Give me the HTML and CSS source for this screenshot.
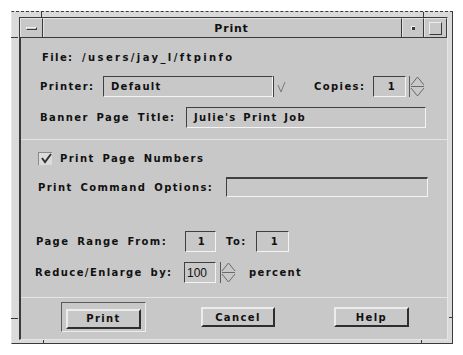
FILE: index.html
```html
<!DOCTYPE html>
<html>
  <head>
    <meta charset="UTF-8" />
    <title>Print</title>
    <link rel="stylesheet" href="styles.css">
  </head>
  <body>
    <div class="window">
      <span class="tick tick-tl"></span>
      <span class="tick tick-tr"></span>
      <span class="tick tick-bl"></span>
      <span class="tick tick-br"></span>
      <span class="tick tick-lt"></span>
      <span class="tick tick-lb"></span>
      <span class="tick tick-rb"></span>

      <div class="frame">
        <div class="titlebar">
          <div class="tb-menu"><span class="menu-bar"></span></div>
          <div class="tb-title">Print</div>
          <div class="tb-min"><span class="min-dot"></span></div>
          <div class="tb-max"><span class="max-box"></span></div>
        </div>

        <div class="content">
          <div class="row row-file">
            <span class="lbl lbl-file">File:</span>
            <span class="lbl lbl-path">/users/jay_l/ftpinfo</span>
          </div>

          <div class="row row-printer">
            <span class="lbl lbl-printer">Printer:</span>
            <div class="field field-printer"><span>Default</span></div>
            <div class="drop">
              <svg width="16" height="21" viewBox="0 0 16 21">
                <polyline points="4,9 7,16 11,6" fill="none" stroke="#7a7a7a" stroke-width="1" />
              </svg>
            </div>
            <span class="lbl lbl-copies">Copies:</span>
            <div class="field field-num field-copies"><span>1</span></div>
            <div class="spin">
              <svg width="15" height="21" viewBox="0 0 15 21">
                <polyline points="1,9 7.5,1 14,9" fill="none" stroke="#6a6a6a" />
                <line x1="1" y1="10.5" x2="14" y2="10.5" stroke="#6a6a6a" />
                <polyline points="1,12 7.5,20 14,12" fill="none" stroke="#6a6a6a" />
              </svg>
            </div>
          </div>

          <div class="row row-banner">
            <span class="lbl lbl-banner">Banner Page Title:</span>
            <div class="field field-banner"><span>Julie's Print Job</span></div>
          </div>

          <div class="sep sep-top"></div>

          <div class="row row-check">
            <span class="check">
              <svg width="12" height="11" viewBox="0 0 12 11">
                <polyline points="2,5 5,9 11,1" fill="none" stroke="#333" stroke-width="2" />
              </svg>
            </span>
            <span class="lbl">Print Page Numbers</span>
          </div>

          <div class="row row-cmd">
            <span class="lbl lbl-cmd">Print Command Options:</span>
            <div class="field field-cmd"></div>
          </div>

          <div class="row row-range">
            <span class="lbl lbl-range">Page Range From:</span>
            <div class="field field-num field-from"><span>1</span></div>
            <span class="lbl lbl-to">To:</span>
            <div class="field field-num field-to"><span>1</span></div>
          </div>

          <div class="row row-reduce">
            <span class="lbl lbl-range">Reduce/Enlarge by:</span>
            <div class="field field-pct"><span>100</span></div>
            <div class="spin spin-pct">
              <svg width="15" height="21" viewBox="0 0 15 21">
                <polyline points="1,9 7.5,1 14,9" fill="none" stroke="#6a6a6a" />
                <line x1="1" y1="10.5" x2="14" y2="10.5" stroke="#6a6a6a" />
                <polyline points="1,12 7.5,20 14,12" fill="none" stroke="#6a6a6a" />
              </svg>
            </div>
            <span class="lbl lbl-pct">percent</span>
          </div>

          <div class="sep sep-bottom"></div>

          <div class="row row-buttons">
            <div class="default-ring"><button class="btn">Print</button></div>
            <button class="btn btn-cancel">Cancel</button>
            <button class="btn btn-help">Help</button>
          </div>
        </div>
      </div>
    </div>
  </body>
</html>
```

FILE: styles.css
```css
* {
  box-sizing: border-box;
}

body {
  margin: 0;
  background: #fff;
  font-family: "DejaVu Sans", sans-serif;
}

.window {
  position: relative;
  width: 442px;
  height: 333px;
  margin: 11px 0 0 11px;
  padding: 5px 4px 3px 7px;
  background: #dadada;
  border-top: 1px dashed #3a3a3a;
  border-right: 1px solid #3a3a3a;
  border-bottom: 1px solid #3a3a3a;
  border-left: 1px solid #e6e6e6;
}

/* resize corner marks on the frame */
.tick {
  position: absolute;
  background: #3a3a3a;
}

.tick-tl { left: 29px; top: 0; width: 1px; height: 5px; }
.tick-tr { left: 411px; top: 0; width: 1px; height: 5px; }
.tick-bl { left: 31px; bottom: 0; width: 1px; height: 3px; }
.tick-br { left: 409px; bottom: 0; width: 1px; height: 3px; }
.tick-lt { left: -1px; top: 25px; width: 7px; height: 1px; }
.tick-lb { left: -1px; top: 306px; width: 7px; height: 1px; }
.tick-rb { right: -1px; top: 305px; width: 4px; height: 1px; }

.frame {
  height: 100%;
  display: flex;
  flex-direction: column;
  background: #c8c8c8;
  border-top: 1px solid #3a3a3a;
  border-left: 2px solid #3a3a3a;
  border-right: 1px solid #e6e6e6;
  border-bottom: 1px solid #e6e6e6;
}

.titlebar {
  display: flex;
  height: 20px;
  margin-left: -1px;
  border-bottom: 1px solid #3a3a3a;
}

.titlebar > div {
  border-top: 1px solid #e2e2e2;
  border-left: 1px solid #e2e2e2;
  border-right: 1px solid #3a3a3a;
  display: flex;
  align-items: center;
  justify-content: center;
}

.tb-menu {
  width: 23px;
}

.menu-bar {
  width: 11px;
  height: 3px;
  border-top: 1px solid #f0f0f0;
  border-bottom: 1px solid #3a3a3a;
  border-left: 1px solid #f0f0f0;
  border-right: 1px solid #3a3a3a;
}

.tb-title {
  flex: 1;
  padding-left: 18px;
  font-size: 11px;
  font-weight: bold;
  letter-spacing: 0.8px;
  color: #111;
}

.tb-min {
  width: 22px;
}

.min-dot {
  width: 4px;
  height: 4px;
  border-top: 1px solid #f0f0f0;
  border-left: 1px solid #f0f0f0;
  background: #3a3a3a;
}

.tb-max {
  width: 23px;
}

.max-box {
  width: 13px;
  height: 13px;
  border-top: 1px solid #eee;
  border-left: 1px solid #eee;
  border-right: 1px solid #3a3a3a;
  border-bottom: 1px solid #3a3a3a;
}

.content {
  flex: 1;
  display: flex;
  flex-direction: column;
}

.row {
  display: flex;
  align-items: center;
  height: 21px;
}

.lbl {
  font-size: 10px;
  font-weight: bold;
  letter-spacing: 1.4px;
  word-spacing: 3px;
  color: #111;
  white-space: nowrap;
}

.field {
  height: 21px;
  display: flex;
  align-items: center;
  padding-left: 7px;
  background: #c8c8c8;
  border-top: 1px solid #404040;
  border-left: 1px solid #404040;
  border-right: 1px solid #f4f4f4;
  border-bottom: 1px solid #f4f4f4;
  font-size: 10px;
  font-weight: bold;
  letter-spacing: 1.3px;
  word-spacing: 2px;
  color: #111;
}

.field-num {
  justify-content: flex-end;
  padding: 0 9px 0 0;
}

.row-file {
  margin-top: 9px;
  height: 20px;
  padding-left: 21px;
}

.lbl-file {
  width: 40px;
}

.lbl-path {
  letter-spacing: 2.4px;
}

.row-printer {
  margin-top: 9px;
  padding-left: 19px;
}

.lbl-printer {
  width: 63px;
}

.field-printer {
  width: 170px;
}

.drop {
  width: 17px;
  height: 21px;
  border-left: 1px solid #404040;
}

.drop svg,
.spin svg {
  display: block;
}

.lbl-copies {
  width: 59px;
  margin-left: 24px;
}

.field-copies {
  width: 33px;
}

.spin {
  width: 16px;
  height: 21px;
  margin-left: 3px;
  border-left: 1px solid #5a5a5a;
}

.row-banner {
  margin-top: 10px;
  padding-left: 19px;
}

.lbl-banner {
  width: 146px;
}

.field-banner {
  width: 240px;
}

.sep {
  height: 1px;
  background: #e4e4e4;
}

.sep-top {
  margin-top: 11px;
}

.row-check {
  margin-top: 10px;
  height: 16px;
  padding-left: 17px;
}

.check {
  width: 14px;
  height: 13px;
  margin-right: 8px;
  background: #dcdcdc;
  border-top: 1px solid #8a8a8a;
  border-left: 1px solid #8a8a8a;
  display: flex;
  align-items: center;
  justify-content: center;
}

.row-cmd {
  margin-top: 11px;
  height: 20px;
  padding-left: 17px;
}

.lbl-cmd {
  width: 188px;
}

.field-cmd {
  width: 202px;
  height: 20px;
  border-top-width: 2px;
}

.row-range {
  margin-top: 34px;
  padding-left: 15px;
}

.lbl-range {
  width: 149px;
}

.field-from {
  width: 31px;
}

.lbl-to {
  width: 30px;
  margin-left: 10px;
}

.field-to {
  width: 33px;
}

.row-reduce {
  margin-top: 10px;
  padding-left: 14px;
}

.field-pct {
  width: 32px;
  padding-left: 2px;
  font-family: "Liberation Sans", sans-serif;
  font-weight: normal;
  font-size: 12px;
  letter-spacing: 0;
}

.spin-pct {
  margin-left: 4px;
}

.lbl-pct {
  margin-left: 13px;
}

.sep-bottom {
  margin-top: 14px;
}

.row-buttons {
  margin-top: 4px;
  height: 30px;
  padding-left: 40px;
}

.default-ring {
  width: 85px;
  height: 30px;
  padding: 4px;
  border-top: 1px solid #5a5a5a;
  border-left: 1px solid #5a5a5a;
  border-right: 1px solid #ececec;
  border-bottom: 1px solid #ececec;
}

.btn {
  width: 75px;
  height: 20px;
  padding: 0;
  background: #c8c8c8;
  border-top: 2px solid #ececec;
  border-left: 2px solid #ececec;
  border-right: 2px solid #2e2e2e;
  border-bottom: 2px solid #2e2e2e;
  font-family: "DejaVu Sans", sans-serif;
  font-size: 10px;
  font-weight: bold;
  letter-spacing: 1.4px;
  color: #111;
}

.btn-cancel {
  width: 74px;
  margin-left: 55px;
}

.btn-help {
  margin-left: 59px;
}
```
